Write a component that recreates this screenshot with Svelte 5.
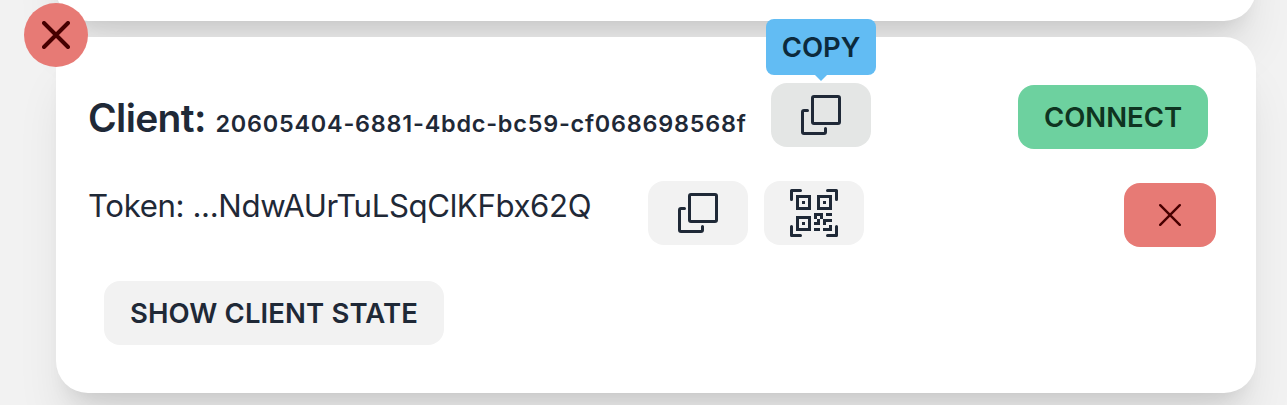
<script>
  const clientId = '20605404-6881-4bdc-bc59-cf068698568f';
  const token = '...NdwAUrTuLSqClKFbx62Q';
</script>

{#snippet copyIcon()}
  <svg width="40" height="40" viewBox="0 0 40 40" fill="none" stroke="currentColor" stroke-width="3" stroke-linecap="round" stroke-linejoin="round">
    <rect x="11.5" y="1.5" width="27" height="27" rx="1.5" />
    <path d="M6.5 15.5H3a1.5 1.5 0 0 0-1.5 1.5V37A1.5 1.5 0 0 0 3 38.500H23A1.5 1.5 0 0 0 24.500 37V33.500" />
  </svg>
{/snippet}

<div class="page">
  <div class="card previous"></div>
  <div class="card client">
    <button class="remove" aria-label="Remove client">
      <svg width="28" height="28" viewBox="0 0 28 28" fill="none" stroke="currentColor" stroke-width="4" stroke-linecap="round">
        <path d="M2 2 26 26M26 2 2 26" />
      </svg>
    </button>

    <div class="row first">
      <h2>Client:</h2>
      <span class="id">{clientId}</span>
      <button class="btn icon hovered" aria-label="Copy client id">
        {@render copyIcon()}
        <span class="tooltip">COPY</span>
      </button>
      <button class="btn text connect">CONNECT</button>
    </div>

    <div class="row second">
      <span class="token">Token: {token}</span>
      <button class="btn icon" aria-label="Copy token">{@render copyIcon()}</button>
      <button class="btn icon qr" aria-label="Show code">
        <svg width="48" height="48" viewBox="0 0 16 16" fill="currentColor">
          <path d="M0 .5A.5.5 0 0 1 .5 0h3a.5.5 0 0 1 0 1H1v2.500a.5.5 0 0 1-1 0v-3Zm12 0a.5.5 0 0 1 .5-.5h3a.5.5 0 0 1 .5.5v3a.5.5 0 0 1-1 0V1h-2.500a.5.5 0 0 1-.5-.5ZM.5 12a.5.5 0 0 1 .5.5V15h2.500a.5.5 0 0 1 0 1h-3a.5.5 0 0 1-.5-.5v-3a.5.5 0 0 1 .5-.5Zm15 0a.5.5 0 0 1 .5.5v3a.5.5 0 0 1-.5.5h-3a.5.5 0 0 1 0-1H15v-2.500a.5.5 0 0 1 .5-.5ZM4 4h1v1H4V4Z" />
          <path d="M7 2H2v5h5V2ZM3 3h3v3H3V3Zm2 8H4v1h1v-1Z" />
          <path d="M7 9H2v5h5V9Zm-4 1h3v3H3v-3Zm8-6h1v1h-1V4Z" />
          <path d="M9 2h5v5H9V2Zm1 1v3h3V3h-3ZM8 8v2h1v1H8v1h2v-2h1v2h1v-1h2v-1h-3V8H8Zm2 2H9V9h1v1Zm4 2h-1v1h-2v1h3v-2Zm-4 2v-1H8v1h2Z" />
          <path d="M12 9h2V8h-2v1Z" />
        </svg>
      </button>
      <button class="btn delete" aria-label="Delete token">
        <svg width="22" height="22" viewBox="0 0 22 22" fill="none" stroke="currentColor" stroke-width="2.400" stroke-linecap="round">
          <path d="M1.200 1.200 20.800 20.800M20.800 1.200 1.200 20.800" />
        </svg>
      </button>
    </div>

    <button class="btn text state">SHOW CLIENT STATE</button>
  </div>
</div>

<style>
  :global(body) {
    background: #f2f2f2;
    overflow: hidden;
  }
  .page {
    box-sizing: border-box;
    height: 405px;
    overflow: hidden;
    padding: 0 31px 0 56px;
    font-family: Inter, sans-serif;
    color: #1f2937;
  }
  .card {
    box-sizing: border-box;
    position: relative;
    background: #fff;
    border-radius: 32px;
    box-shadow: 0 40px 50px -10px rgba(0, 0, 0, 0.1), 0 16px 20px -12px rgba(0, 0, 0, 0.1);
  }
  .previous {
    height: 356px;
    margin-top: -335px;
  }
  .client {
    height: 356px;
    margin-top: 16px;
    padding: 48px 40px 0 32px;
  }
  button {
    box-sizing: border-box;
    border: 0;
    padding: 0;
    font: inherit;
    color: inherit;
  }
  svg {
    display: block;
  }
  .remove {
    position: absolute;
    left: -32px;
    top: -34px;
    width: 64px;
    height: 64px;
    border-radius: 50%;
    background: #e77a75;
    color: #470000;
    display: grid;
    place-items: center;
  }
  .row {
    display: flex;
    align-items: flex-start;
  }
  .first {
    height: 96px;
    padding-right: 8px;
  }
  h2 {
    margin: 0;
    width: 127.500px;
    font-size: 39px;
    line-height: 66px;
    font-weight: 600;
    letter-spacing: -0.65px;
    white-space: nowrap;
  }
  .id {
    width: 555.500px;
    font-size: 23.400px;
    line-height: 77px;
    font-weight: 600;
    letter-spacing: 0.78px;
    white-space: nowrap;
  }
  .btn {
    position: relative;
    flex: none;
    height: 64px;
    border-radius: 16px;
    background: #f2f2f2;
    display: flex;
    align-items: center;
    justify-content: center;
    font-size: 27.500px;
    font-weight: 600;
    white-space: nowrap;
  }
  .text {
    line-height: 64px;
  }
  .icon {
    width: 100px;
  }
  .hovered {
    margin-top: -2px;
    background: #e4e6e5;
  }
  .tooltip {
    position: absolute;
    left: -5px;
    top: -64px;
    width: 110px;
    height: 56px;
    line-height: 56px;
    border-radius: 8px;
    background: #62bcf3;
    color: #0c2a3c;
    letter-spacing: -0.1px;
    text-align: center;
  }
  .tooltip::after {
    content: '';
    position: absolute;
    left: 49px;
    top: 100%;
    border: 6px solid transparent;
    border-bottom: 0;
    border-top-color: #62bcf3;
  }
  .connect {
    width: 190px;
    margin-left: auto;
    background: #6dd19f;
    color: #0f3421;
  }
  .second {
    height: 100px;
  }
  .token {
    width: 560px;
    font-size: 31.200px;
    line-height: 50px;
    letter-spacing: -0.38px;
    white-space: nowrap;
  }
  .qr {
    margin-left: 16px;
  }
  .delete {
    width: 92px;
    margin: 2px 0 0 auto;
    background: #e77a75;
    color: #470000;
  }
  .state {
    width: 340px;
    margin-left: 16px;
    letter-spacing: 0.12px;
  }
</style>
